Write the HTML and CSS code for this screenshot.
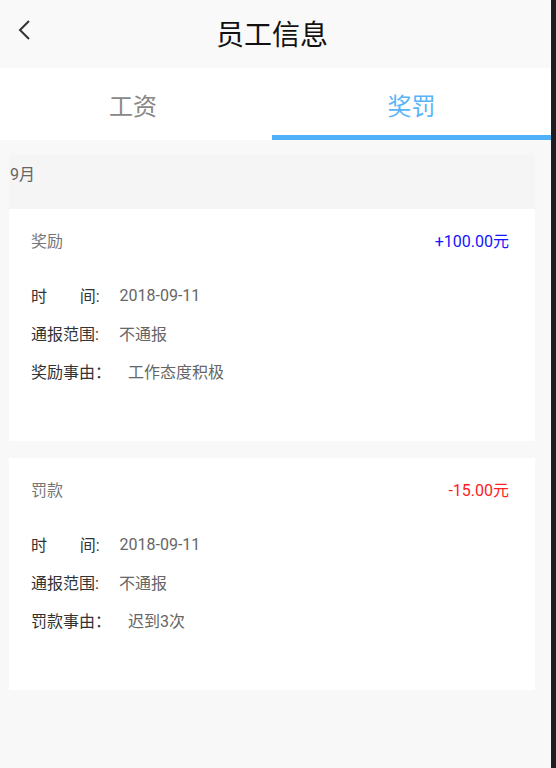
FILE: index.html
```html
<!DOCTYPE html>
<html lang="zh-CN">
<head>
    <meta charset="UTF-8">
    <meta name="viewport" content="width=device-width, initial-scale=1.0">
    <title>员工信息</title>
    <link rel="stylesheet" href="styles.css">
</head>
<body>
    <div class="screen">
        <div class="app">
            <header class="topbar">
                <a class="back" href="#">
                    <svg width="14" height="22" viewBox="0 0 14 22">
                        <polyline points="12,2 3,11 12,20" fill="none" stroke="#333" stroke-width="2"/>
                    </svg>
                </a>
                <h1>员工信息</h1>
            </header>

            <nav class="tabs">
                <div class="tab tab-left">工资</div>
                <div class="tab tab-right active">奖罚</div>
            </nav>

            <main class="content">
                <div class="month">9月</div>

                <section class="card">
                    <div class="card-head">
                        <span class="kind">奖励</span>
                        <span class="amount plus">+100.00元</span>
                    </div>
                    <div class="row"><span class="label">时&emsp;&emsp;间:</span><span class="value">2018-09-11</span></div>
                    <div class="row"><span class="label">通报范围:</span><span class="value">不通报</span></div>
                    <div class="row"><span class="label">奖励事由：</span><span class="value wide">工作态度积极</span></div>
                </section>

                <section class="card">
                    <div class="card-head">
                        <span class="kind">罚款</span>
                        <span class="amount minus">-15.00元</span>
                    </div>
                    <div class="row"><span class="label">时&emsp;&emsp;间:</span><span class="value">2018-09-11</span></div>
                    <div class="row"><span class="label">通报范围:</span><span class="value">不通报</span></div>
                    <div class="row"><span class="label">罚款事由：</span><span class="value wide">迟到3次</span></div>
                </section>
            </main>
        </div>
        <div class="edge"></div>
    </div>
</body>
</html>
```

FILE: styles.css
```css
body {
    margin: 0;
    padding: 0;
    font-family: "Roboto", "Noto Sans CJK SC", sans-serif;
    background: #f8f8f8;
    color: #333;
}

.screen {
    display: flex;
    height: 768px;
    overflow: hidden;
}

.app {
    flex: 1;
    display: flex;
    flex-direction: column;
    background: #f8f8f8;
}

.edge {
    width: 5px;
    background: #1e1e1e;
}

.topbar {
    height: 68px;
    display: flex;
    align-items: center;
    background: #f9f9f9;
    position: relative;
}

.back {
    position: absolute;
    left: 17px;
    top: 19px;
    display: block;
    width: 14px;
    height: 22px;
}

.back svg {
    display: block;
}

.topbar h1 {
    flex: 1;
    margin: 0;
    padding-right: 7px;
    padding-bottom: 3px;
    text-align: center;
    font-size: 28px;
    font-weight: normal;
    color: #111;
}

.tabs {
    display: flex;
    height: 72px;
    background: white;
}

.tab {
    display: flex;
    align-items: center;
    justify-content: center;
    font-size: 24px;
    color: #888;
    box-sizing: border-box;
    padding-top: 1px;
}

.tab-left {
    width: 266px;
    margin-right: 6px;
}

.tab-right {
    flex: 1;
}

.tab.active {
    color: #5ab4f8;
    border-bottom: 5px solid #50b0f8;
    padding-top: 6px;
}

.content {
    padding: 15px 16px 0 9px;
}

.month {
    height: 54px;
    line-height: 40px;
    padding-left: 1px;
    background: #f5f5f5;
    font-size: 16px;
    color: #666;
}

.card {
    background: white;
    padding: 19px 26px 51px 22px;
    margin-bottom: 17px;
}

.card-head {
    display: flex;
    justify-content: space-between;
    align-items: center;
    height: 24px;
    margin-bottom: 24px;
    font-size: 16px;
}

.kind {
    color: #777;
}

.amount.plus {
    color: #1414ff;
}

.amount.minus {
    color: #ff2020;
}

.row {
    height: 38px;
    display: flex;
    align-items: center;
    font-size: 16px;
}

.label {
    color: #333;
}

.value {
    margin-left: 20px;
    color: #666;
}

.value.wide {
    margin-left: 17px;
}
```
